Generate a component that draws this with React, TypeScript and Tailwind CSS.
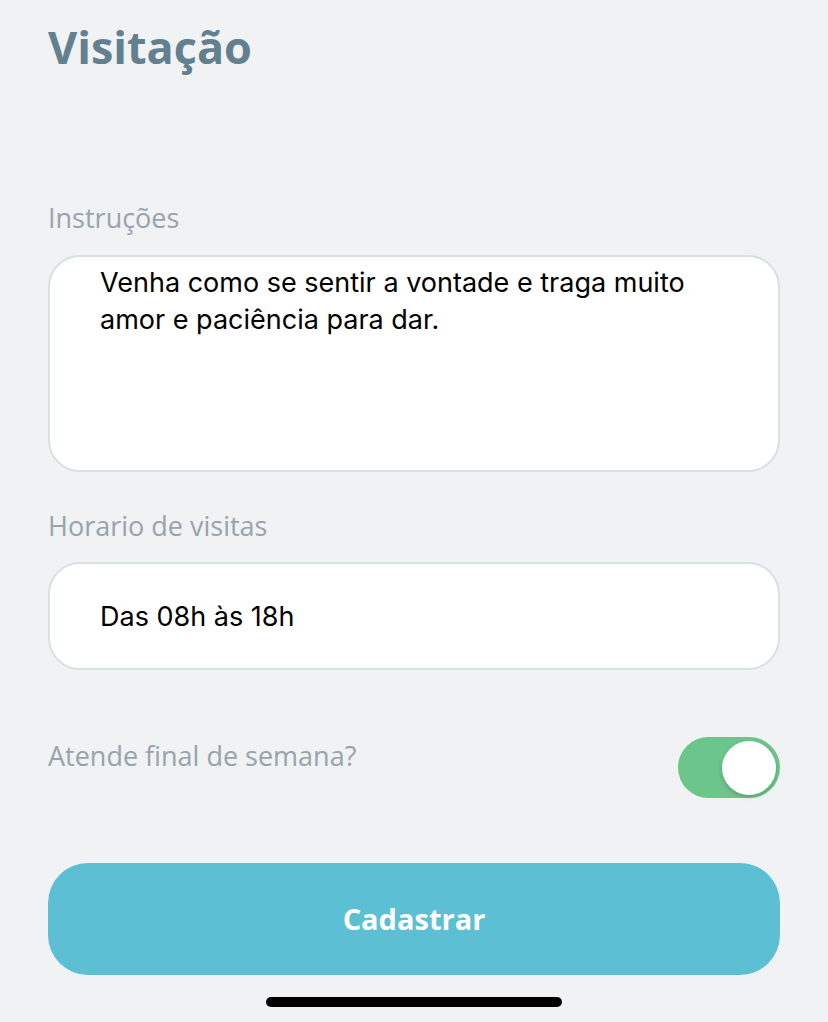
import { useState } from "react";

export default function App() {
  const [weekend, setWeekend] = useState(true);
  const [instructions, setInstructions] = useState(
    "Venha como se sentir a vontade e traga muito amor e paciência para dar.",
  );
  const [hours, setHours] = useState("Das 08h às 18h");

  const labelCls =
    "text-[27px] leading-[30px] text-[#97a4ad] font-['Open_Sans',sans-serif]";
  const fieldCls =
    "w-full rounded-[32px] border-2 border-[#d7e1e4] bg-white pl-[50px] pr-[40px] text-[27px] text-black outline-none font-['Inter',sans-serif]";

  return (
    <div className="flex min-h-[1022px] w-full flex-col bg-[#f0f2f4] px-12 pt-[25px]">
      <h1 className="font-['Open_Sans',sans-serif] text-[45px] font-bold leading-[44px] text-[#62808f]">
        Visitação
      </h1>

      {/* Instruções */}
      <label className={`mt-[134px] ${labelCls}`}>Instruções</label>
      <textarea
        value={instructions}
        onChange={(e) => setInstructions(e.target.value)}
        className={`mt-[22px] h-[217px] resize-none pt-[7px] leading-[37px] ${fieldCls}`}
      />

      {/* Horario */}
      <label className={`mt-[39px] ${labelCls}`}>Horario de visitas</label>
      <input
        value={hours}
        onChange={(e) => setHours(e.target.value)}
        className={`mt-[21px] h-[108px] ${fieldCls}`}
      />

      {/* Final de semana */}
      <div className="mt-[67px] flex items-start justify-between">
        <span className={`mt-[4px] ${labelCls}`}>Atende final de semana?</span>
        <button
          type="button"
          onClick={() => setWeekend(!weekend)}
          className={`flex h-[61px] w-[102px] items-center rounded-full px-[4px] transition ${
            weekend ? "justify-end bg-[#6cc58a]" : "justify-start bg-[#d7e1e4]"
          }`}
        >
          <span className="h-[54px] w-[54px] rounded-full bg-white shadow-[0_2px_4px_rgba(0,0,0,0.18)]" />
        </button>
      </div>

      <button
        type="button"
        className="mt-[65px] flex h-[112px] w-full items-center justify-center rounded-[40px] bg-[#5dbfd4] font-['Open_Sans',sans-serif] text-[29px] font-bold text-white"
      >
        Cadastrar
      </button>

      <div className="mt-[22px] flex justify-center">
        <div className="h-[10px] w-[296px] rounded-full bg-black" />
      </div>
    </div>
  );
}
